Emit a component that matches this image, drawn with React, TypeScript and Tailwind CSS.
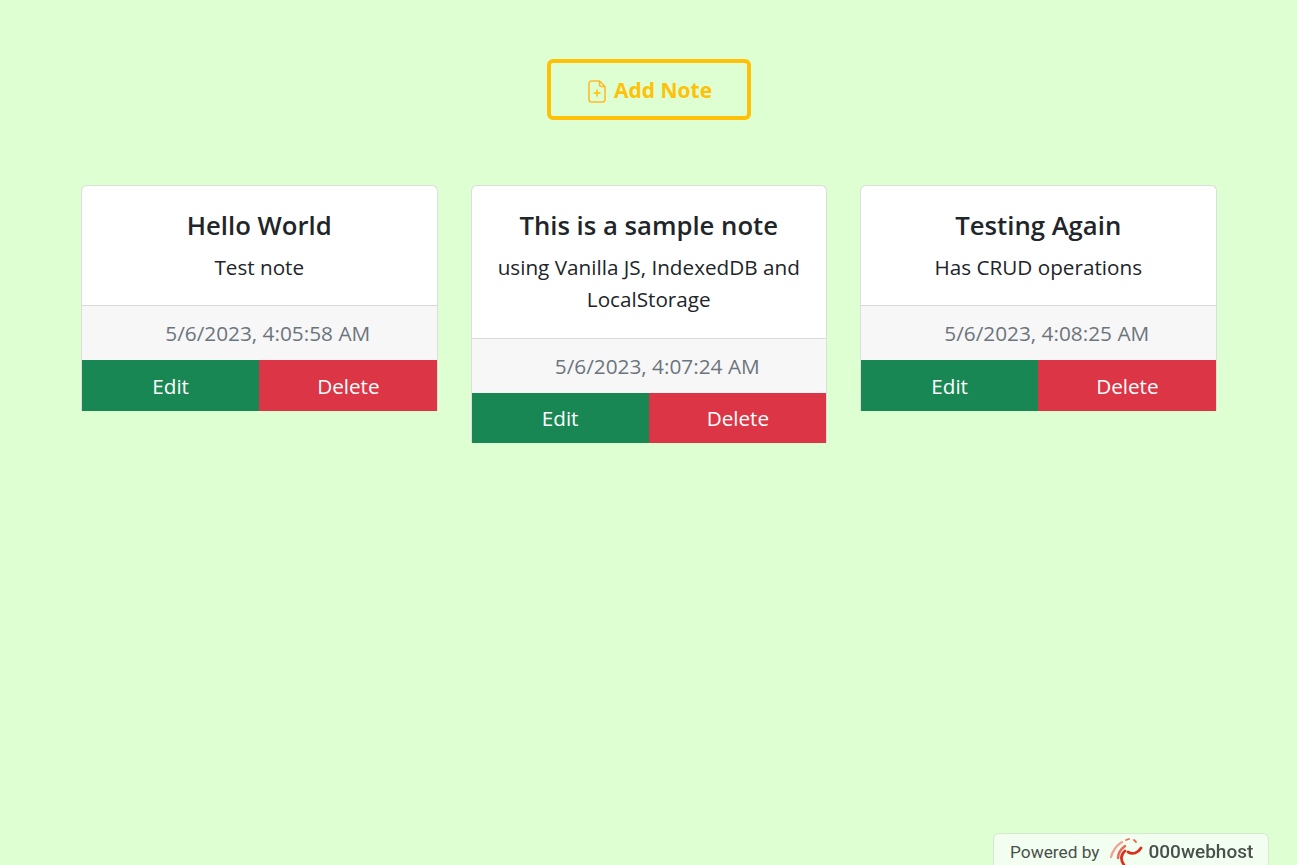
const notes = [
  { id: 1, title: "Hello World", text: "Test note", date: "5/6/2023, 4:05:58 AM" },
  { id: 2, title: "This is a sample note", text: "using Vanilla JS, IndexedDB and LocalStorage", date: "5/6/2023, 4:07:24 AM" },
  { id: 3, title: "Testing Again", text: "Has CRUD operations", date: "5/6/2023, 4:08:25 AM" },
];

function NoteCard({ note }: { note: (typeof notes)[number] }) {
  return (
    <div className="w-[356.5px] self-start overflow-hidden rounded-t-[6px] border border-b-0 border-[#dcdedc] bg-white">
      <div className="px-4 pt-[25px] pb-[22px] text-center">
        <h5 className="text-[25.7px] leading-[29px] font-semibold text-[#212529]">{note.title}</h5>
        <p className="mt-[11px] text-[20.7px] leading-[32.4px] text-[#212529]">{note.text}</p>
      </div>
      <div className="h-[55px] border-t border-[#d9d9d9] bg-[#f7f7f7] pl-[17px] text-center text-[20.8px] leading-[54px] text-[#6c757d]">
        {note.date}
      </div>
      <div className="flex h-[50.6px] text-[20.7px] text-white">
        <button className="w-1/2 bg-[#198754] pt-[1px]">Edit</button>
        <button className="w-1/2 bg-[#dc3545] pt-[1px] pl-[1px]">Delete</button>
      </div>
    </div>
  );
}

export default function App() {
  return (
    <div className="relative h-[865px] overflow-hidden bg-[#ddffd2] font-['Open_Sans','Noto_Sans',sans-serif]">
      <div className="flex justify-center pt-[59px]">
        <button className="flex h-[61px] w-[204px] items-center justify-center gap-[8px] rounded-[6px] border-4 border-[#ffc107] pt-[2px] pl-[3px] text-[21px] font-bold text-[#ffc107]">
          <svg className="mt-[2px] h-[23px] w-[18px]" viewBox="0 0 18 23" fill="none" stroke="#ffb92e" strokeWidth="1.6">
            <path d="M3.500 1H11.500L17 6.500V19.500a2.500 2.500 0 0 1-2.500 2.500H3.500a2.500 2.500 0 0 1-2.500-2.500V3.500A2.500 2.500 0 0 1 3.500 1z" />
            <path d="M11.500 1V5a1.500 1.500 0 0 0 1.500 1.500H17" />
            <path d="M9 9.500V16.500M5.500 13H12.500" stroke="#ffc107" />
          </svg>
          Add Note
        </button>
      </div>

      <div className="mt-[65px] flex justify-center gap-[33px] pl-[0.5px]">
        {notes.map((note) => (
          <NoteCard key={note.id} note={note} />
        ))}
      </div>

      <div className="absolute right-[28px] bottom-0 flex h-[32px] w-[276px] items-center rounded-t-[6px] border border-b-0 border-[#d5e8d0] bg-[#f2fff0] pt-[6px] pl-[16px] font-['Roboto',sans-serif] text-[#4a4f4c] blur-[0.5px]">
        <span className="text-[17.3px] whitespace-nowrap">Powered by</span>
        <svg className="mt-[-6px] mr-[5px] ml-[10px] h-[32px] w-[34px] shrink-0" viewBox="0 0 34 32" fill="none" strokeLinecap="round">
          <path d="M2 23C4 16 8 11 13 8" stroke="#f3a196" strokeWidth="2.400" />
          <path d="M9 24C9 19 12 15 16 12" stroke="#ea6a5a" strokeWidth="2.600" />
          <path d="M15 31C11 26 12 20 16 17" stroke="#d9301f" strokeWidth="2.800" />
          <path d="M19 18C24 21 29 19 32 14" stroke="#d9301f" strokeWidth="2.800" />
          <path d="M17 6L20 5M25 6L27 8" stroke="#ea6a5a" strokeWidth="1.800" />
        </svg>
        <span className="text-[19px] font-medium">000webhost</span>
      </div>
    </div>
  );
}
